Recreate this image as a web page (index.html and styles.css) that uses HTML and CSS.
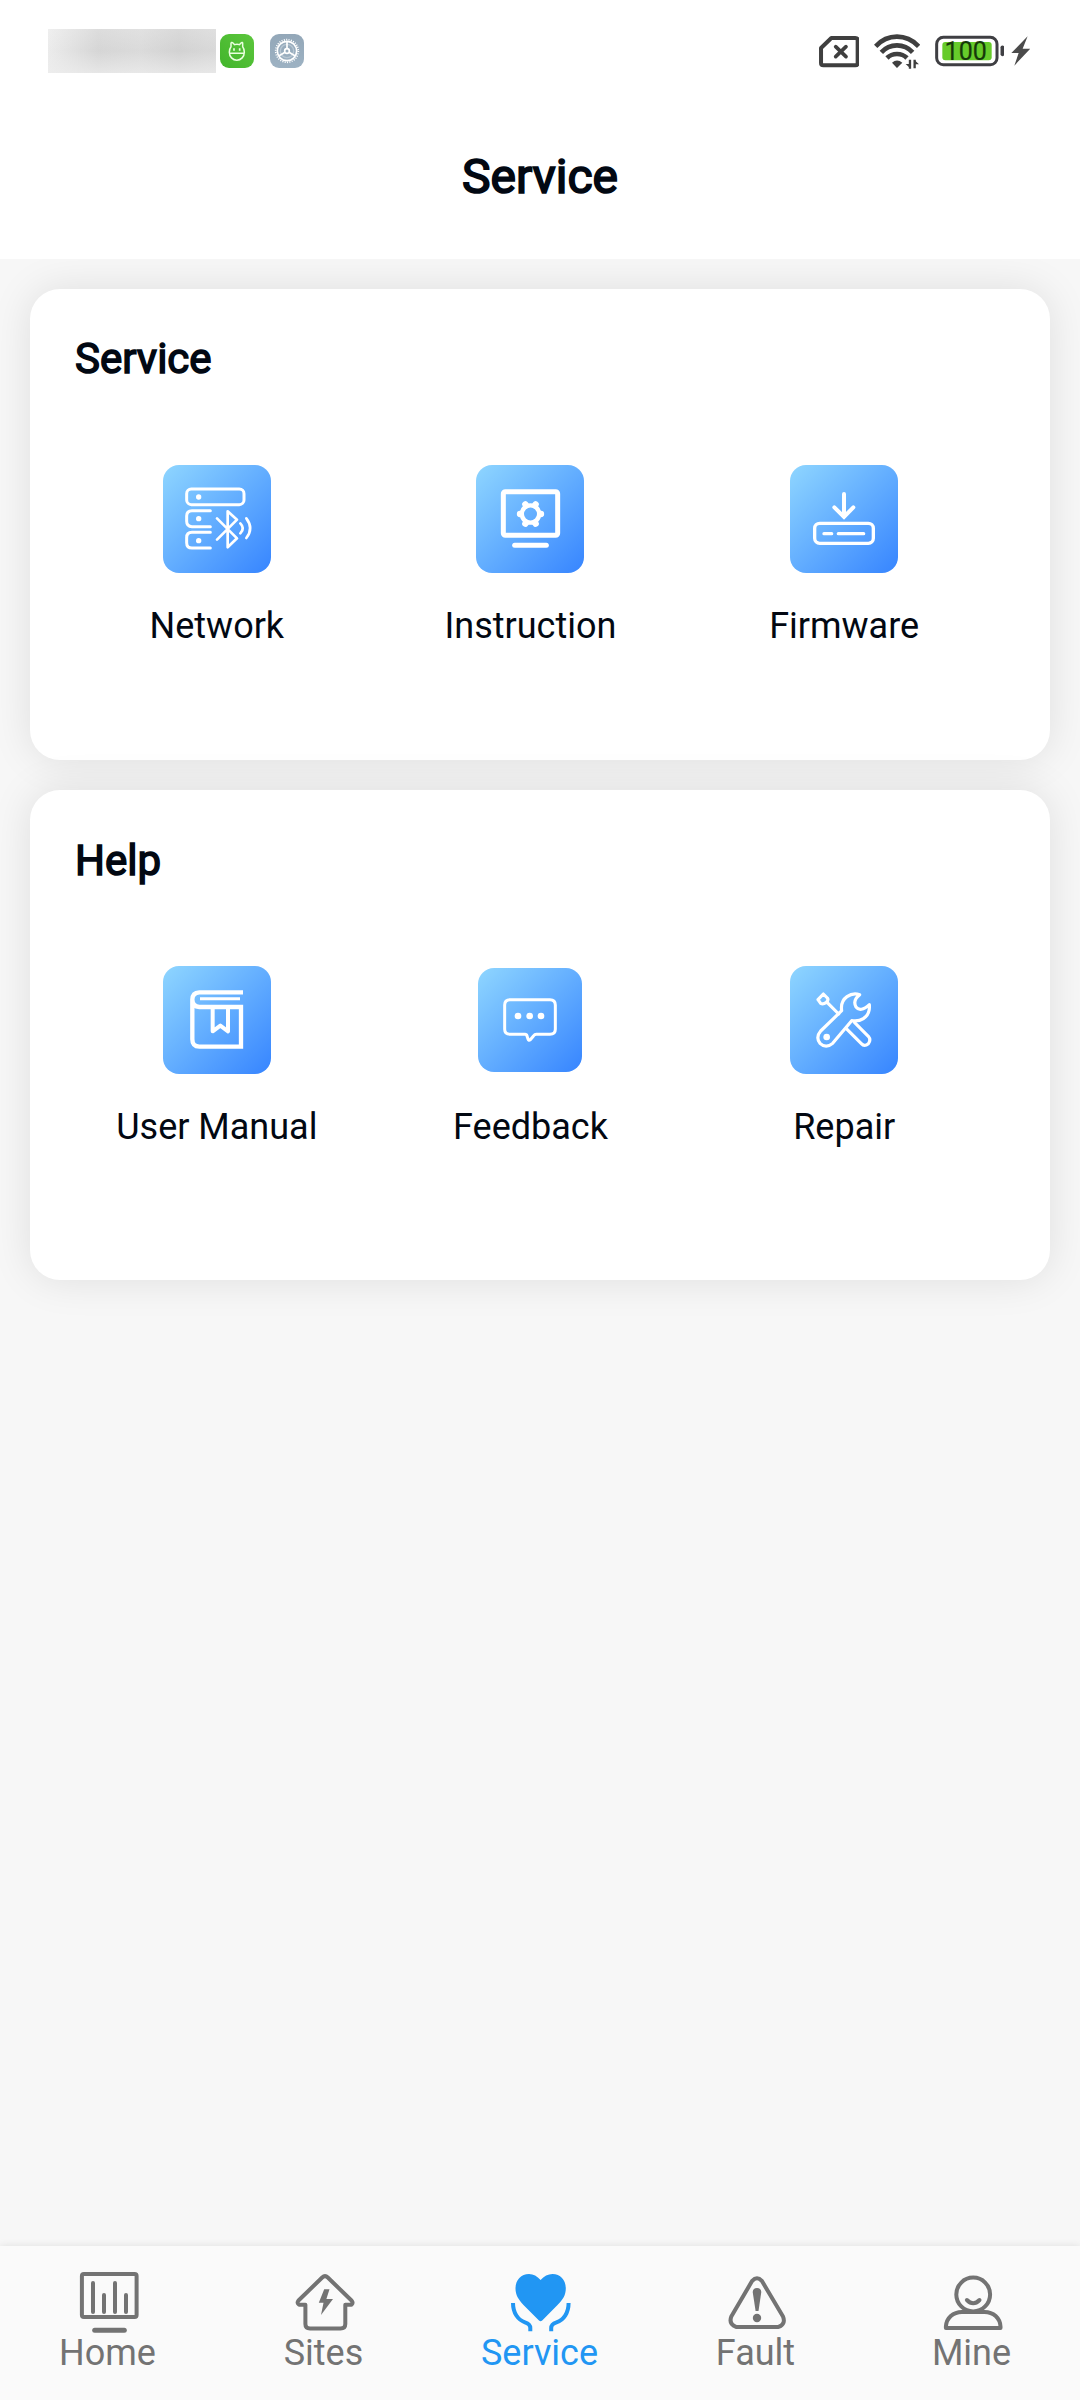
FILE: index.html
```html
<!DOCTYPE html>
<html lang="en">
<head>
<meta charset="utf-8">
<title>Service</title>
<link rel="stylesheet" href="styles.css">
</head>
<body>
<svg class="defs" width="0" height="0" aria-hidden="true">
  <defs>
    <linearGradient id="green" x1="1" y1="0" x2="0" y2="1"><stop offset="0" stop-color="#5cc63c"/><stop offset="1" stop-color="#42b52c"/></linearGradient>
    <linearGradient id="slate" x1="0" y1="0" x2="0" y2="1"><stop offset="0" stop-color="#93a7b8"/><stop offset="1" stop-color="#9db2c3"/></linearGradient>
  </defs>
</svg>
<div class="app">
  <header class="top">
    <div class="status">
      <div class="status-left">
        <span class="masked"></span>
        <svg class="app-badge" viewBox="570 72 102 102">
          <rect x="570" y="72" width="102" height="102" rx="27" fill="url(#green)"/>
          <path d="M603 110V100Q604 96 608 98L614 104Q621 101 628 104L634 98Q638 96 638 100V110Q643 116 643 127A22 23 0 0 1 598 127Q598 116 603 110ZM597 130H644" fill="none" stroke="#eaffdf" stroke-width="4.5" stroke-linejoin="round"/>
          <path d="M612 115V122M629 115V122" stroke="#eaffdf" stroke-width="5"/>
        </svg>
        <svg class="app-badge gear-badge" viewBox="720 72 102 102">
          <rect x="720" y="72" width="102" height="102" rx="27" fill="url(#slate)"/>
          <circle cx="771" cy="123" r="20" fill="none" stroke="#b7c6d2" stroke-width="4"/>
          <circle cx="771" cy="123" r="29" fill="none" stroke="#fff" stroke-width="5"/>
          <circle cx="771" cy="123" r="34" fill="none" stroke="#fff" stroke-width="5" stroke-dasharray="3.2 3.92"/>
          <circle cx="771" cy="123" r="7" fill="none" stroke="#fff" stroke-width="5"/>
          <path d="M771 116V95M765 127L746 138M777 127L796 138" stroke="#fff" stroke-width="5"/>
        </svg>
      </div>
      <div class="status-right">
        <svg class="sim" viewBox="56 50 122 94"><path d="M93 56H165Q172 56 172 63V131Q172 138 165 138H69Q62 138 62 131V86Z" fill="none" stroke="#3f3f3f" stroke-width="12" stroke-linejoin="round"/><path d="M106 82L137 112M137 82L106 112" stroke="#3f3f3f" stroke-width="11" stroke-linecap="round"/></svg>
        <svg class="wifi" viewBox="221 40 139 110"><g fill="none" stroke="#3f3f3f" stroke-width="14"><path d="M226 80Q253 51 290 51T355 80"/><path d="M243 98Q262 77 290 77T337 98"/><path d="M260 115Q272 103 290 103T320 115"/></g><path d="M275 129Q290 116 306 129L290 145Z" fill="#3f3f3f"/><path d="M329 120V147M343 146V120" stroke="#3f3f3f" stroke-width="7"/><path d="M329 145L316 133H329ZM343 122L356 134H343Z" fill="#3f3f3f"/></svg>
        <svg class="battery" viewBox="404 45 209 95"><rect x="409" y="52" width="181" height="82" rx="20" fill="none" stroke="#3f3f43" stroke-width="9"/><rect x="426" y="66" width="148" height="55" rx="9" fill="#67cb2b"/><path d="M606 82V103" stroke="#3f3f43" stroke-width="11" stroke-linecap="round"/><text x="496" y="120" text-anchor="middle" class="charge">100</text></svg>
        <svg class="bolt" viewBox="632 48 58 90"><path d="M682 49L633 99H655L642 137L690 86H667Z" fill="#4b4b4b"/></svg>
      </div>
    </div>
    <h1 class="page-title">Service</h1>
  </header>

  <main class="content">
    <section class="card">
      <h2 class="card-title">Service</h2>
      <div class="tiles">
        <div class="tile">
          <svg class="tile-icon" viewBox="69 45 324 324">
            <g fill="none" stroke="#fff" stroke-width="9" stroke-linecap="round" stroke-linejoin="round">
              <rect x="140" y="117" width="172" height="47" rx="14"/>
              <path d="M211 182H156Q140 182 140 198V214Q140 230 156 230H211M211 247H156Q140 247 140 263V278Q140 294 156 294H211"/>
              <path d="M231 205L291 265L263 292V184L291 209L231 269" stroke-width="8"/>
              <path d="M301 220Q316 235 301 250M319 205Q342 235 319 264" stroke-width="8"/>
            </g>
            <circle cx="176" cy="141" r="8" fill="#fff"/><circle cx="176" cy="206" r="8" fill="#fff"/><circle cx="176" cy="272" r="8" fill="#fff"/>
          </svg>
          <span class="tile-label">Network</span>
        </div>
        <div class="tile">
          <svg class="tile-icon" viewBox="138 45 324 324">
            <rect x="220" y="125" width="163" height="131" rx="6" fill="none" stroke="#fff" stroke-width="15"/>
            <path d="M254 286H349" stroke="#fff" stroke-width="15" stroke-linecap="round"/>
            <circle cx="301.500" cy="192" r="26" fill="none" stroke="#fff" stroke-width="13"/>
            <path d="M286 163L288 166M317 163L315 166M333 192H331M317 221L315 218M286 221L288 218M270 192H272" stroke="#fff" stroke-width="19" stroke-linecap="round"/>
          </svg>
          <span class="tile-label">Instruction</span>
        </div>
        <div class="tile">
          <svg class="tile-icon" viewBox="120 45 324 324">
            <g fill="none" stroke="#fff" stroke-linecap="round">
              <path d="M282 132V198M253 172L282 201L310 172" stroke-width="12"/>
              <rect x="194" y="220" width="176" height="60" rx="15" stroke-width="10"/>
              <path d="M222 251H245M265 251H341" stroke-width="10"/>
            </g>
          </svg>
          <span class="tile-label">Firmware</span>
        </div>
      </div>
    </section>

    <section class="card card-help">
      <h2 class="card-title">Help</h2>
      <div class="tiles">
        <div class="tile">
          <svg class="tile-icon" viewBox="159 48 324 324">
            <g fill="none" stroke="#fff" stroke-width="13">
              <path d="M399 127H268Q247 128 247 149Q248 170 268 171H393V290H268Q247 290 247 268V146"/>
              <path d="M308 172V244L331 227L354 244V172" stroke-width="12" stroke-linejoin="round"/>
              <path d="M270 146H390" stroke-width="9"/>
            </g>
          </svg>
          <span class="tile-label">User Manual</span>
        </div>
        <div class="tile">
          <svg class="tile-icon tile-icon-small" viewBox="144 54 312 312">
            <path d="M240 149H360Q376 149 376 165V238Q376 253 360 253H319Q314 253 311 257L301 269Q296 274 294 267L291 258Q290 253 285 253H240Q224 253 224 238V165Q224 149 240 149Z" fill="none" stroke="#fff" stroke-width="9" stroke-linejoin="round"/>
            <circle cx="264" cy="198" r="10" fill="#fff"/><circle cx="299" cy="198" r="10" fill="#fff"/><circle cx="333" cy="198" r="10" fill="#fff"/>
          </svg>
          <span class="tile-label">Feedback</span>
        </div>
        <div class="tile">
          <svg class="tile-icon" viewBox="120 48 324 324">
            <g fill="none" stroke="#fff" stroke-width="9.500" stroke-linecap="round" stroke-linejoin="round">
              <path d="M275 182Q271 154 291 140Q309 127 329 134Q307 151 318 171Q331 188 358 164Q361 192 340 206Q326 215 305 212L248 280Q228 297 210 280Q196 262 212 243Z"/>
              <path d="M220 132L204 149L212 160Q219 164 228 158Q237 151 232 144ZM232 158L266 192M289 236L334 281Q343 291 355 281Q364 270 355 259L314 218"/>
            </g>
            <circle cx="230" cy="261" r="10" fill="#fff"/>
          </svg>
          <span class="tile-label">Repair</span>
        </div>
      </div>
    </section>
  </main>

  <nav class="tabs">
    <a class="tab">
      <svg class="tab-icon" viewBox="0 0 64 68"><rect x="4.900" y="5.900" width="54.700" height="43.200" rx="2"/><path d="M16 15V44M27 27V44M38 15V44M49 27V44" stroke-linecap="round"/><path d="M17.700 62.300H47.300" stroke-width="5" stroke-linecap="round"/></svg>
      <span>Home</span>
    </a>
    <a class="tab">
      <svg class="tab-icon" viewBox="0 0 64 68"><path d="M29.200 9.500Q32 6.800 34.800 9.500L58.500 32.500Q60.500 35 58.500 36.700H52.300V56Q52.300 60.500 47.500 60.500H17Q12.400 60.500 12.400 56V36.700H6Q3.500 35 5.500 32.500Z" stroke-linejoin="round"/><path class="solid" d="M31.200 21.300H36.500L33.400 31H40L28 47L30.500 34.800H25.800Z"/></svg>
      <span>Sites</span>
    </a>
    <a class="tab tab-active">
      <svg class="tab-icon" viewBox="0 0 64 68"><path class="solid" d="M31.600 12C28 8 24.500 6 20 6C12 6 6.500 12 6.500 20.500C6.500 27 9.500 31.500 14.500 37L30 52.500Q31.600 54 33.200 52.500L48.500 37C54 31.500 56.800 27 56.800 20.500C56.800 12 51.500 6 43.500 6C39 6 35 8 31.600 12Z"/><path d="M4 35C4 45 9 52 16 54.300Q21.300 56 21.300 60V63.300M59.600 35C59.600 45 54.500 52 47.500 54.300Q42.200 56 42.200 60V63.300"/></svg>
      <span>Service</span>
    </a>
    <a class="tab">
      <svg class="tab-icon" viewBox="0 0 64 68"><path d="M27.200 12.800Q32 7.500 36.800 12.800L58 48.500Q61 56 53.500 58.900H11Q3.500 56 6.300 48.500Z" stroke-linejoin="round"/><path class="solid" d="M27.700 24Q28 20 32 20T36.300 24L33.500 43H30.600Z"/><circle class="solid" cx="32" cy="50" r="4.200"/></svg>
      <span>Fault</span>
    </a>
    <a class="tab">
      <svg class="tab-icon" viewBox="0 0 64 68"><circle cx="32.200" cy="26.500" r="16.900"/><path d="M25.900 32Q32.200 38.500 38.500 32" stroke-linecap="round"/><path d="M4.900 60V58.500C5.500 50 12 44 21 44H43.500C52.500 44 59 50 59.500 58.500V60Z" stroke-linejoin="round"/></svg>
      <span>Mine</span>
    </a>
  </nav>
</div>
</body>
</html>
```
FILE: styles.css
```css
* { box-sizing: border-box; }
body { margin: 0; font-family: Roboto, sans-serif; color: #020812; background: #f7f7f7; }
svg { display: block; flex: none; }
.defs { position: absolute; }
.app { display: flex; flex-direction: column; height: 2400px; overflow: hidden; }

.top { position: relative; z-index: 1; height: 259px; background: #fff; }
.status { display: flex; justify-content: space-between; align-items: center; height: 102px; padding: 0 50px 0 48px; }
.status-left, .status-right { display: flex; align-items: center; }
.masked {
  width: 168px; height: 44px; margin-right: 4px;
  background:
    linear-gradient(180deg, rgba(236,236,236,.3), rgba(210,210,210,.15) 50%, rgba(236,236,236,.75)),
    linear-gradient(90deg, #f0f0f0, #d6d6d6 30%, #dcdcdc 55%, #d2d2d2 78%, #dadada);
}
.app-badge { width: 34px; height: 34px; }
.gear-badge { margin-left: 16px; }
.sim { width: 40.700px; height: 31.300px; margin-right: 14.300px; margin-top: 2px; }
.wifi { width: 46.300px; height: 36.700px; margin-right: 14.700px; margin-top: 1px; }
.battery { width: 69.700px; height: 31.700px; margin-right: 6.300px; }
.bolt { width: 19.300px; height: 30px; }
.charge { font-size: 75px; fill: #16380a; stroke: #16380a; stroke-width: .6; }
.page-title {
  margin: 47px 0 0; font-size: 48px; line-height: 56px; font-weight: 400; text-align: center;
  -webkit-text-stroke: 1.700px currentColor;
}

.content { flex: 1; display: flex; flex-direction: column; gap: 30px; padding: 30px; }
.card { height: 471px; padding: 45px 0 0; border-radius: 30px; background: #fff; box-shadow: 0 0 42px rgba(0, 0, 0, .1); }
.card-help { height: 490px; padding-top: 46px; }
.card-help .tiles { margin-top: 81px; }
.card-title {
  margin: 0 0 0 45px; font-size: 42px; line-height: 49px; font-weight: 400;
  -webkit-text-stroke: 1.500px currentColor;
}
.tiles { display: grid; grid-template-columns: repeat(3, 1fr); margin: 82px 49px 0 30px; }
.tile { display: flex; flex-direction: column; align-items: center; }
.tile-icon { width: 108px; height: 108px; border-radius: 16px; background: linear-gradient(135deg, #8fd6ff, #3a88ff 96%); }
.tile-icon-small { width: 104px; height: 104px; margin: 2px; }
.tile-label { margin-top: 32px; font-size: 36px; line-height: 42px; }

.tabs { display: flex; height: 154px; padding-top: 22px; background: #fafafa; box-shadow: 0 0 8px rgba(0, 0, 0, .1); color: #737373; }
.tab { flex: 1; display: flex; flex-direction: column; align-items: center; font-size: 36px; line-height: 42px; }
.tab span { margin: -4px 1px 0 0; }
.tab-icon { width: 64px; height: 68px; margin-left: 2px; fill: none; stroke: currentColor; stroke-width: 4; }
.tab-icon .solid { fill: currentColor; stroke: none; }
.tab-active { color: #2196f3; }
```
